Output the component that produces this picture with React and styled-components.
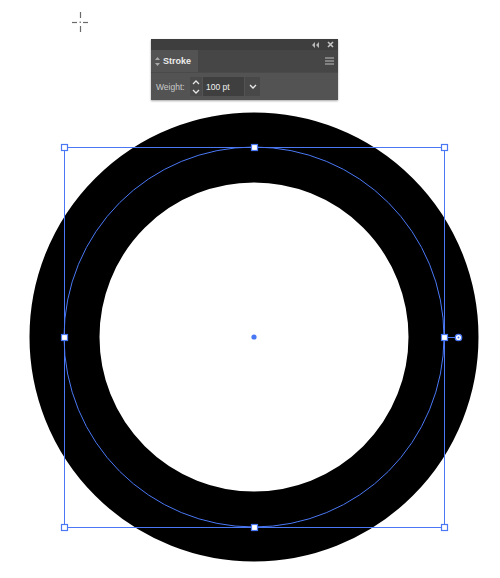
import React from "react";
import styled, { createGlobalStyle } from "styled-components";

const GlobalStyle = createGlobalStyle`
  html, body {
    margin: 0;
    padding: 0;
    background: #ffffff;
  }
`;

const Stage = styled.div`
  position: relative;
  width: 500px;
  height: 578px;
  overflow: hidden;
  background: #ffffff;
  font-family: "Liberation Sans", Arial, sans-serif;
`;

const Artboard = styled.svg`
  position: absolute;
  left: 0;
  top: 0;
`;

const Panel = styled.div`
  position: absolute;
  left: 151px;
  top: 39px;
  width: 187px;
  display: flex;
  flex-direction: column;
  background: #535353;
  box-shadow: 0 1px 2px rgba(0, 0, 0, 0.35);
`;

const TitleBar = styled.div`
  height: 11px;
  background: #3e3e3e;
  display: flex;
  justify-content: flex-end;
  align-items: center;
  gap: 8px;
  padding-right: 4px;
  color: #b8b8b8;
`;

const TabRow = styled.div`
  height: 22px;
  background: #464646;
  display: flex;
  align-items: stretch;
  justify-content: space-between;
  padding-right: 4px;
`;

const Tab = styled.div`
  display: flex;
  align-items: center;
  gap: 3px;
  padding: 0 7px 0 4px;
  background: #535353;
  color: #ececec;
  font-size: 9px;
  font-weight: bold;
`;

const MenuButton = styled.div`
  display: flex;
  align-items: center;
`;

const Body = styled.div`
  height: 27px;
  display: flex;
  align-items: center;
  padding-left: 5px;
  border-top: 1px solid #4a4a4a;
`;

const Label = styled.span`
  color: #c9c9c9;
  font-size: 8.5px;
  width: 34px;
`;

const Spinner = styled.div`
  width: 12px;
  height: 19px;
  background: #4a4a4a;
  display: flex;
  align-items: center;
  justify-content: center;
`;

const Field = styled.div`
  width: 38px;
  height: 19px;
  background: ${(p) => (p.$dark ? "#3f3f3f" : "#4a4a4a")};
  color: #f0f0f0;
  font-size: 8.5px;
  display: flex;
  align-items: center;
  padding-left: 3px;
  margin-left: 1px;
`;

const Dropdown = styled.div`
  width: 15px;
  height: 19px;
  background: #484848;
  display: flex;
  align-items: center;
  justify-content: center;
  margin-left: 1px;
`;

const BLUE = "#4a78f5";

const handles = [
  [64, 147],
  [254, 147],
  [444, 147],
  [64, 337],
  [444, 337],
  [64, 527],
  [254, 527],
  [444, 527],
];

const Artwork = () => (
  <Artboard width="500" height="578" viewBox="0 0 500 578">
    {/* cursor crosshair */}
    <g stroke="#6a6a6a" strokeWidth="1.2">
      <line x1="72" y1="22.5" x2="77" y2="22.5" />
      <line x1="83" y1="22.5" x2="88" y2="22.5" />
      <line x1="80.5" y1="12" x2="80.5" y2="18" />
      <line x1="80.5" y1="26" x2="80.5" y2="32" />
    </g>
    <rect x="79.5" y="21.5" width="1.5" height="1.5" fill="#888" />

    <circle cx="254" cy="337" r="189.5" fill="none" stroke="#000" strokeWidth="70" />
    <circle cx="254" cy="337" r="190" fill="none" stroke={BLUE} strokeWidth="1" />
    <rect x="64.5" y="147.5" width="380" height="380" fill="none" stroke={BLUE} strokeWidth="1" />

    {handles.map(([x, y]) => (
      <rect
        key={`${x}-${y}`}
        x={x - 2.5}
        y={y - 2.5}
        width="6"
        height="6"
        fill="#ffffff"
        stroke={BLUE}
        strokeWidth="1.2"
      />
    ))}

    <circle cx="254" cy="337" r="2.6" fill={BLUE} />

    <line x1="448" y1="337.5" x2="455" y2="337.5" stroke={BLUE} strokeWidth="1" />
    <circle cx="458.5" cy="337.5" r="3.2" fill="#ffffff" stroke={BLUE} strokeWidth="1.3" />
    <circle cx="458.5" cy="337.5" r="1" fill={BLUE} />
  </Artboard>
);

const StrokePanel = () => (
  <Panel>
    <TitleBar>
      <svg width="7" height="6" viewBox="0 0 7 6">
        <path d="M3 0 L0 3 L3 6 Z M7 0 L4 3 L7 6 Z" fill="#b8b8b8" />
      </svg>
      <svg width="7" height="7" viewBox="0 0 7 7">
        <path d="M1 1 L6 6 M6 1 L1 6" stroke="#c4c4c4" strokeWidth="1.6" />
      </svg>
    </TitleBar>
    <TabRow>
      <Tab>
        <svg width="5" height="9" viewBox="0 0 5 9">
          <path d="M2.5 0 L5 3 L0 3 Z M2.5 9 L5 6 L0 6 Z" fill="#a8a8a8" />
        </svg>
        Stroke
      </Tab>
      <MenuButton>
        <svg width="9" height="8" viewBox="0 0 9 8">
          <path d="M0 1 H9 M0 4 H9 M0 7 H9" stroke="#bdbdbd" strokeWidth="1" />
        </svg>
      </MenuButton>
    </TabRow>
    <Body>
      <Label>Weight:</Label>
      <Spinner>
        <svg width="8" height="14" viewBox="0 0 8 14">
          <path d="M1 4 L4 1 L7 4 M1 10 L4 13 L7 10" fill="none" stroke="#e6e6e6" strokeWidth="1.3" />
        </svg>
      </Spinner>
      <Field $dark>100 pt</Field>
      <Dropdown>
        <svg width="8" height="5" viewBox="0 0 8 5">
          <path d="M1 1 L4 4 L7 1" fill="none" stroke="#e6e6e6" strokeWidth="1.4" />
        </svg>
      </Dropdown>
    </Body>
  </Panel>
);

export default function App() {
  return (
    <>
      <GlobalStyle />
      <Stage>
        <Artwork />
        <StrokePanel />
      </Stage>
    </>
  );
}
